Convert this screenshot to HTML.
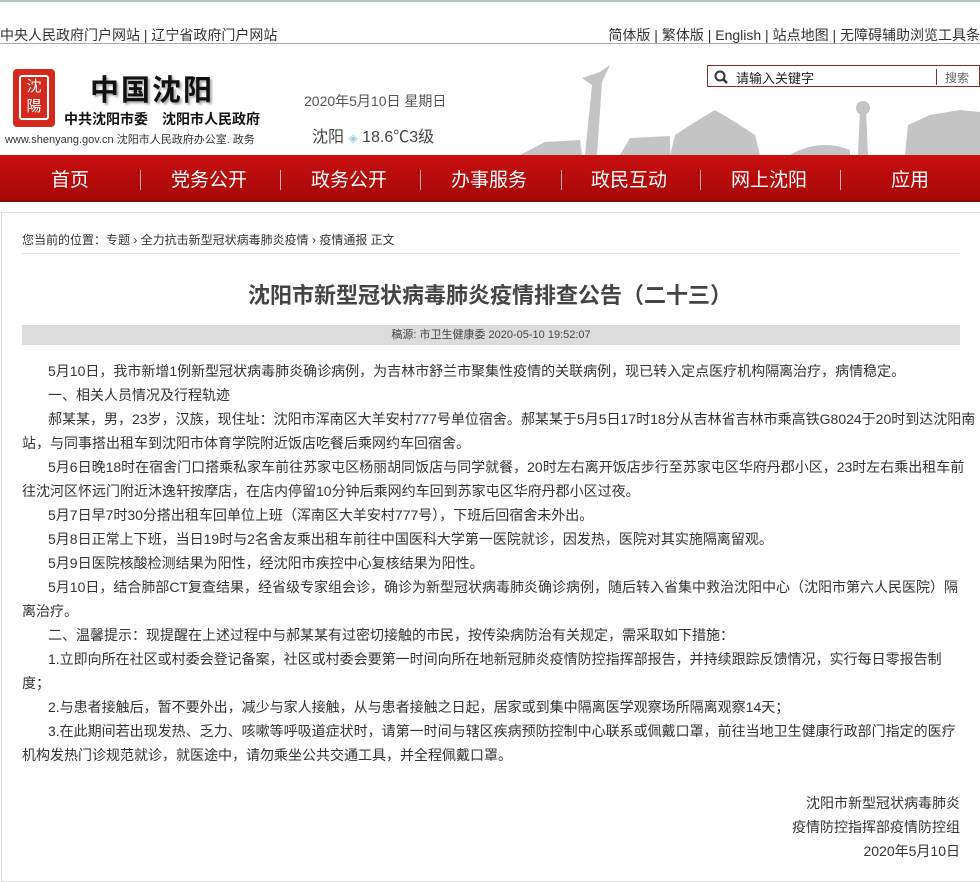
<!DOCTYPE html>
<html><head><meta charset="utf-8"><style>
*{margin:0;padding:0;box-sizing:border-box}
body{width:980px;height:867px;overflow:hidden;background:#fff;font-family:"Liberation Sans","Noto Sans CJK SC",sans-serif;color:#333;position:relative}
.top{position:absolute;left:0;top:0;width:980px;height:44px;border-top:2px solid #b9c4c4;border-bottom:1px solid #aaa}
.top .l{position:absolute;left:0;top:23px;font-size:14px;color:#333}
.top .r{position:absolute;right:0;top:23px;font-size:14px;color:#333;white-space:nowrap}
.hdr{position:absolute;top:45px;left:0;width:980px;height:110px}
.logo{position:absolute;left:13px;top:24px;width:42px;height:58px;background:#d42a1e;border-radius:4px}
.logo span{position:absolute;left:6px;top:6px;width:30px;height:45px;border:2px solid #fff;border-radius:3px;color:#fff;font-size:15px;line-height:20px;text-align:center}
.t1{position:absolute;left:90px;top:22px;font-size:29px;font-weight:bold;color:#111;letter-spacing:2px;text-shadow:2px 2px 2px #aaa}
.t2{position:absolute;left:64px;top:64px;font-size:14px;font-weight:bold;color:#111}
.t3{position:absolute;left:5px;top:86px;font-size:11px;color:#333}
.date{position:absolute;left:304px;top:46px;font-size:14px;color:#555}
.wea{position:absolute;left:312px;top:78px;font-size:16px;color:#444}
.city{position:absolute;left:520px;top:15px;width:460px;height:95px}
.srch{position:absolute;left:707px;top:65px;width:273px;height:22px;border:1px solid #8b2b2b;background:#fff}
.srch .i{position:absolute;left:28px;top:2px;font-size:13px;color:#222}
.srch .b{position:absolute;left:228px;top:3px;font-size:12px;color:#666;border-left:1px solid #8b2b2b;padding-left:8px;height:16px}
.nav{position:absolute;top:155px;left:0;width:980px;height:47px;background:linear-gradient(#c80f0f,#a80808);border-bottom:2px solid #8a0a0a}
.nav div{position:absolute;top:10px;font-size:19px;color:#fff;transform:translateX(-50%);white-space:nowrap}
.nav i{position:absolute;top:15px;width:1px;height:20px;background:#f0b0b0}
.box{position:absolute;top:212px;left:1px;width:990px;height:670px;border:1px solid #e0e0e0}
.bc{position:absolute;left:22px;top:231px;font-size:12px;color:#333}
.bl{position:absolute;left:22px;top:253px;width:938px;height:1px;background:#ddd}
h1{position:absolute;left:0;width:980px;top:278px;text-align:center;font-size:22px;color:#444;font-weight:bold}
.src{position:absolute;left:22px;top:325px;width:938px;height:20px;background:#dcdcdc;text-align:center;font-size:11px;line-height:20px;color:#444}
.txt{position:absolute;left:22px;top:359px;width:950px;font-size:14px;line-height:24px;color:#333;white-space:nowrap}
.txt p{text-indent:26px}
.sig{position:absolute;right:20px;top:791px;font-size:14px;line-height:24px;text-align:right;color:#333}
</style></head><body>
<div class="top"><div class="l">中央人民政府门户网站 | 辽宁省政府门户网站</div><div class="r">简体版 | 繁体版 | English | 站点地图 | 无障碍辅助浏览工具条</div></div>
<div class="hdr">
<svg class="city" viewBox="0 0 460 95"><g fill="#c4c4c4"><path d="M65 95 L72 25 L62 18 L80 12 L90 5 L82 22 L77 95Z"/><path d="M150 95 L155 75 L175 62 L195 50 L215 62 L235 75 L240 95Z"/><rect x="165" y="72" width="65" height="23"/><path d="M338 95 L340 50 L346 50 L348 95Z"/><circle cx="343" cy="48" r="7"/><path d="M385 95 L388 65 L410 55 L440 50 L460 52 L460 95Z"/><path d="M100 95 L110 78 L150 76 L150 95Z"/><path d="M0 95 L25 82 L60 80 L62 95Z"/><path d="M270 95 Q300 78 330 90 L330 95Z"/></g></svg>
<div class="logo"><span>沈<br>陽</span></div>
<div class="t1">中国沈阳</div>
<div class="t2">中共沈阳市委　沈阳市人民政府</div>
<div class="t3">www.shenyang.gov.cn 沈阳市人民政府办公室. 政务</div>
<div class="date">2020年5月10日 星期日</div>
<div class="wea">沈阳 <span style="color:#9cd;font-size:12px">◈</span> 18.6℃3级</div>
</div>
<div class="srch"><svg style="position:absolute;left:5px;top:3px" width="16" height="16"><circle cx="7" cy="7" r="4.5" stroke="#333" stroke-width="2" fill="none"/><path d="M10 10 L14 14" stroke="#333" stroke-width="2.5"/></svg><span class="i">请输入关键字</span><span class="b">搜索</span></div>
<div class="nav">
<div style="left:70px">首页</div><i style="left:140px"></i>
<div style="left:209px">党务公开</div><i style="left:280px"></i>
<div style="left:349px">政务公开</div><i style="left:420px"></i>
<div style="left:489px">办事服务</div><i style="left:561px"></i>
<div style="left:629px">政民互动</div><i style="left:700px"></i>
<div style="left:769px">网上沈阳</div><i style="left:840px"></i>
<div style="left:910px">应用</div>
</div>
<div class="box"></div>
<div class="bc">您当前的位置：专题 › 全力抗击新型冠状病毒肺炎疫情 › 疫情通报 正文</div>
<div class="bl"></div>
<h1>沈阳市新型冠状病毒肺炎疫情排查公告（二十三）</h1>
<div class="src">稿源: 市卫生健康委 2020-05-10 19:52:07</div>
<div class="txt">
<p>5月10日，我市新增1例新型冠状病毒肺炎确诊病例，为吉林市舒兰市聚集性疫情的关联病例，现已转入定点医疗机构隔离治疗，病情稳定。</p>
<p>一、相关人员情况及行程轨迹</p>
<p>郝某某，男，23岁，汉族，现住址：沈阳市浑南区大羊安村777号单位宿舍。郝某某于5月5日17时18分从吉林省吉林市乘高铁G8024于20时到达沈阳南</p>
<div>站，与同事搭出租车到沈阳市体育学院附近饭店吃餐后乘网约车回宿舍。</div>
<p>5月6日晚18时在宿舍门口搭乘私家车前往苏家屯区杨丽胡同饭店与同学就餐，20时左右离开饭店步行至苏家屯区华府丹郡小区，23时左右乘出租车前</p>
<div>往沈河区怀远门附近沐逸轩按摩店，在店内停留10分钟后乘网约车回到苏家屯区华府丹郡小区过夜。</div>
<p>5月7日早7时30分搭出租车回单位上班（浑南区大羊安村777号），下班后回宿舍未外出。</p>
<p>5月8日正常上下班，当日19时与2名舍友乘出租车前往中国医科大学第一医院就诊，因发热，医院对其实施隔离留观。</p>
<p>5月9日医院核酸检测结果为阳性，经沈阳市疾控中心复核结果为阳性。</p>
<p>5月10日，结合肺部CT复查结果，经省级专家组会诊，确诊为新型冠状病毒肺炎确诊病例，随后转入省集中救治沈阳中心（沈阳市第六人民医院）隔</p>
<div>离治疗。</div>
<p>二、温馨提示：现提醒在上述过程中与郝某某有过密切接触的市民，按传染病防治有关规定，需采取如下措施：</p>
<p>1.立即向所在社区或村委会登记备案，社区或村委会要第一时间向所在地新冠肺炎疫情防控指挥部报告，并持续跟踪反馈情况，实行每日零报告制</p>
<div>度；</div>
<p>2.与患者接触后，暂不要外出，减少与家人接触，从与患者接触之日起，居家或到集中隔离医学观察场所隔离观察14天；</p>
<p>3.在此期间若出现发热、乏力、咳嗽等呼吸道症状时，请第一时间与辖区疾病预防控制中心联系或佩戴口罩，前往当地卫生健康行政部门指定的医疗</p>
<div>机构发热门诊规范就诊，就医途中，请勿乘坐公共交通工具，并全程佩戴口罩。</div>
</div>
<div class="sig">沈阳市新型冠状病毒肺炎<br>疫情防控指挥部疫情防控组<br>2020年5月10日</div>
</body></html>
